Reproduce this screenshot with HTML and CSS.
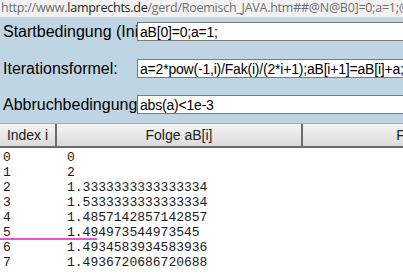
FILE: index.html
```
<!DOCTYPE html>
<html lang="de">
<head>
    <meta charset="UTF-8">
    <title>Roemisch JAVA</title>
    <link rel="stylesheet" href="styles.css">
</head>
<body>
    <div class="adresse">http://www.<b>lamprechts.de</b>/gerd/Roemisch_JAVA.htm##@N@B0]=0;a=1;@N</div>

    <div class="eingabe">
        <div class="zeile zeile-start">
            <label class="titel" for="start">Startbedingung (Initialisierung)</label>
            <input type="text" id="start" value="aB[0]=0;a=1;">
        </div>
        <div class="zeile zeile-iter">
            <label class="titel" for="iter">Iterationsformel:</label>
            <input type="text" id="iter" value="a=2*pow(-1,i)/Fak(i)/(2*i+1);aB[i+1]=aB[i]+a;">
        </div>
        <div class="zeile zeile-ende">
            <label class="titel" for="ende">Abbruchbedingung</label>
            <input type="text" id="ende" value="abs(a)<1e-3">
        </div>
    </div>

    <div class="kopf">
        <div class="spalte spalte-index">Index i</div>
        <div class="spalte spalte-folge">Folge aB[i]</div>
        <div class="spalte spalte-folge">Folge a[i]</div>
    </div>

    <div class="ausgabe">
        <div class="reihe"><span>0</span><span>0</span></div>
        <div class="reihe"><span>1</span><span>2</span></div>
        <div class="reihe"><span>2</span><span>1.3333333333333334</span></div>
        <div class="reihe"><span>3</span><span>1.5333333333333334</span></div>
        <div class="reihe"><span>4</span><span>1.4857142857142857</span></div>
        <div class="reihe markiert"><span>5</span><span>1.494973544973545</span></div>
        <div class="reihe"><span>6</span><span>1.4934583934583936</span></div>
        <div class="reihe"><span>7</span><span>1.4936720686720688</span></div>
    </div>
</body>
</html>
```

FILE: styles.css
```
body {
    margin: 0;
    width: 403px;
    height: 279px;
    overflow: hidden;
    background-color: #fff;
    font-family: 'Liberation Sans', Arial, sans-serif;
}

.adresse {
    height: 17px;
    line-height: 16px;
    padding-left: 1px;
    font-family: 'Open Sans', sans-serif;
    font-size: 12.5px;
    letter-spacing: -0.25px;
    color: #6e6e6e;
    background-color: #f2f2f2;
    white-space: nowrap;
    overflow: hidden;
}

.adresse b {
    font-weight: normal;
    color: #1e1e1e;
}

.eingabe {
    background-color: #c0d5e3;
    padding: 5px 0 9px 0;
    border-bottom: 1px solid #9fb0bb;
}

.zeile {
    display: flex;
    align-items: center;
    white-space: nowrap;
}

.zeile-iter {
    margin-top: 18px;
}

.zeile-ende {
    margin-top: 17px;
}

.titel {
    width: 134px;
    padding-left: 3px;
    flex-shrink: 0;
    overflow: hidden;
    font-size: 16px;
    color: #000;
}

.zeile input {
    width: 300px;
    height: 19px;
    margin: 0;
    padding: 0 2px;
    border: 1px solid #7a7a7a;
    box-sizing: border-box;
    font-family: 'Liberation Sans', Arial, sans-serif;
    font-size: 14px;
    letter-spacing: -0.2px;
    color: #000;
    background-color: #fff;
    flex-shrink: 0;
}

.kopf {
    display: flex;
    height: 22px;
    border-bottom: 2px solid #6b6b6b;
    white-space: nowrap;
}

.spalte {
    flex-shrink: 0;
    line-height: 22px;
    font-size: 14px;
    color: #222;
    text-align: center;
    background: linear-gradient(#f3f3f3, #dcdcdc);
    border-right: 2px solid #6b6b6b;
}

.spalte-index {
    width: 55px;
}

.spalte-folge {
    width: 244px;
}

.ausgabe {
    padding-top: 2px;
    font-family: 'Liberation Mono', 'Courier New', monospace;
    font-size: 13px;
    color: #1a1a1a;
}

.reihe {
    display: flex;
    height: 15px;
    line-height: 15px;
    padding-left: 3px;
}

.reihe span:first-child {
    width: 64px;
}

.markiert {
    position: relative;
}

/* pinke Markierung unter Zeile 5 */
.markiert::after {
    content: "";
    position: absolute;
    left: 0;
    top: 13px;
    width: 97px;
    height: 2px;
    background-color: #f050c8;
}
```
